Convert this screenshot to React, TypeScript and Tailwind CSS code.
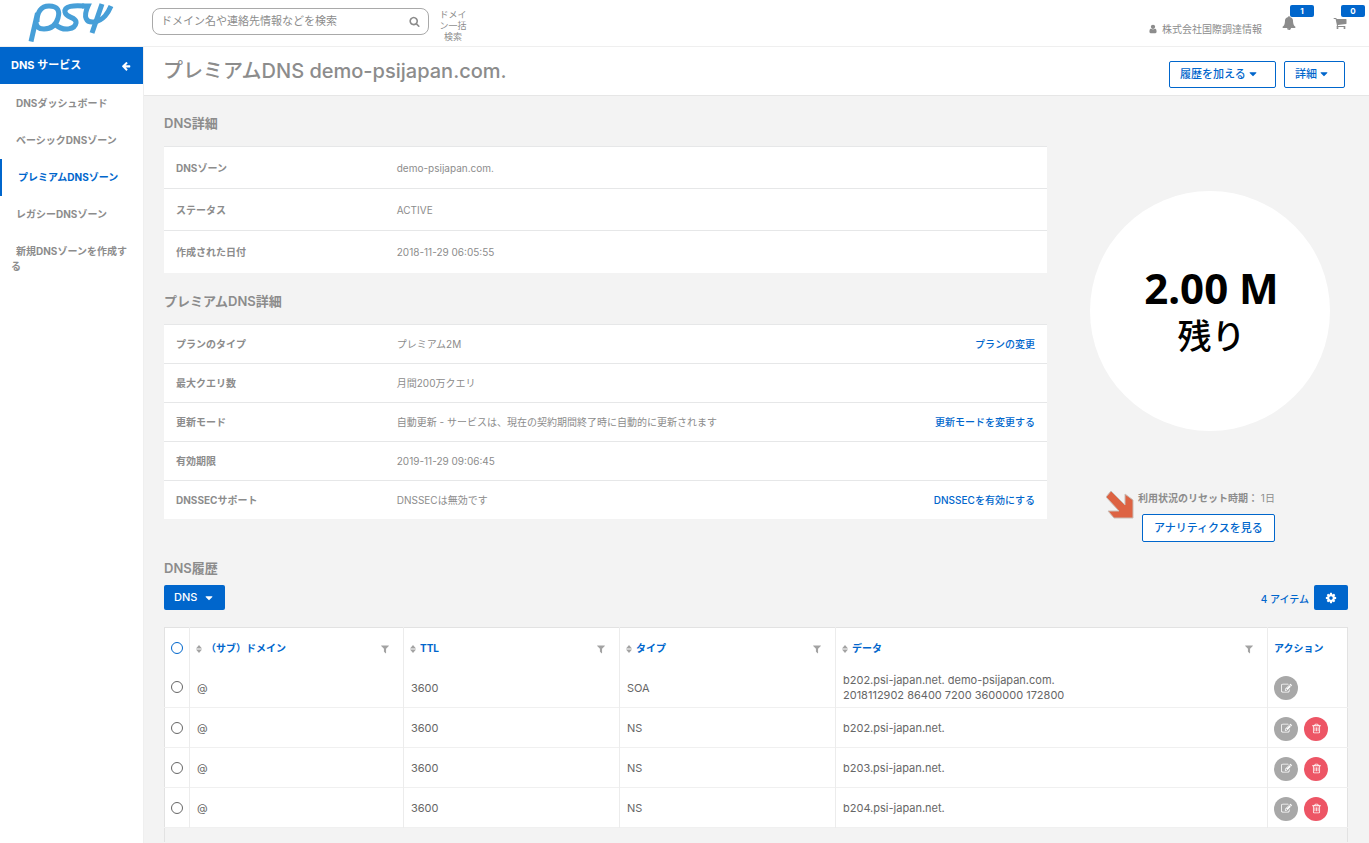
import React, { useState } from 'react';

const icons = {
  edit: "M888 1184l116-116-152-152-116 116v56h96v96h56zm440-720q-16-16-33 1l-350 350q-17 17-1 33t33-1l350-350q17-17 1-33zm80 594v190q0 119-84.5 203.5t-203.5 84.5h-832q-119 0-203.5-84.5t-84.5-203.5v-832q0-119 84.5-203.5t203.5-84.5h832q63 0 117 25 15 7 18 23 3 17-9 29l-49 49q-14 14-32 8-23-6-45-6h-832q-66 0-113 47t-47 113v832q0 66 47 113t113 47h832q66 0 113-47t47-113v-126q0-13 9-22l64-64q15-15 35-7t20 29zm-96-738l288 288-672 672h-288v-288zm444 132l-92 92-288-288 92-92q28-28 68-28t68 28l152 152q28 28 28 68t-28 68z",
  trash: "M704 736v576q0 14-9 23t-23 9h-64q-14 0-23-9t-9-23v-576q0-14 9-23t23-9h64q14 0 23 9t9 23zm256 0v576q0 14-9 23t-23 9h-64q-14 0-23-9t-9-23v-576q0-14 9-23t23-9h64q14 0 23 9t9 23zm256 0v576q0 14-9 23t-23 9h-64q-14 0-23-9t-9-23v-576q0-14 9-23t23-9h64q14 0 23 9t9 23zm128 724v-948h-896v948q0 22 7 40.5t14.5 27 10.5 8.5h832q3 0 10.5-8.5t14.5-27 7-40.5zm-672-1076h448l-48-117q-7-9-17-11h-317q-10 2-17 11zm928 32v64q0 14-9 23t-23 9h-96v948q0 83-47 143.5t-113 60.5h-832q-66 0-113-58.5t-47-141.5v-952h-96q-14 0-23-9t-9-23v-64q0-14 9-23t23-9h309l70-167q15-37 54-63t79-26h320q40 0 79 26t54 63l70 167h309q14 0 23 9t9 23z",
  search: "M1216 832q0-185-131.5-316.5t-316.5-131.5-316.5 131.5-131.5 316.5 131.5 316.5 316.5 131.5 316.5-131.5 131.5-316.5zm512 832q0 52-38 90t-90 38q-54 0-90-38l-343-342q-179 124-399 124-143 0-273.5-55.5t-225-150-150-225-55.5-273.5 55.5-273.5 150-225 225-150 273.5-55.5 273.5 55.5 225 150 150 225 55.5 273.5q0 220-124 399l343 343q37 37 37 90z",
  user: "M1536 1399q0 109-62.5 187t-150.5 78h-854q-88 0-150.5-78t-62.5-187q0-85 8.5-160.5t31.5-152 58.5-131 94-89 134.5-34.5q131 128 313 128t313-128q76 0 134.5 34.5t94 89 58.5 131 31.5 152 8.5 160.5zm-256-887q0 159-112.5 271.5t-271.5 112.5-271.5-112.5-112.5-271.5 112.5-271.5 271.5-112.5 271.5 112.5 112.5 271.5z",
  arrowLeft: "M1664 896v128q0 53-32.5 90.5t-84.5 37.5h-704l293 294q38 36 38 90t-38 90l-75 76q-37 37-90 37-52 0-91-37l-651-652q-37-37-37-90 0-52 37-91l651-650q38-38 91-38 52 0 90 38l75 74q38 38 38 91t-38 91l-293 293h704q52 0 84.5 37.5t32.5 90.5z",
  cart: "M704 1536q0 52-38 90t-90 38-90-38-38-90 38-90 90-38 90 38 38 90zm896 0q0 52-38 90t-90 38-90-38-38-90 38-90 90-38 90 38 38 90zm128-1088v512q0 24-16.5 42.5t-40.5 21.5l-1044 122q13 60 13 70 0 16-24 64h920q26 0 45 19t19 45-19 45-45 19h-1024q-26 0-45-19t-19-45q0-11 8-31.5t16-36 21.5-40 15.5-29.5l-177-823h-204q-26 0-45-19t-19-45 19-45 45-19h256q16 0 28.5 6.5t19.5 15.5 13 24.5 8 26 5.5 29.5 4.5 26h1201q26 0 45 19t19 45z",
  bell: "M912 1696q0-16-16-16-59 0-101.5-42.5t-42.5-101.5q0-16-16-16t-16 16q0 73 51.5 124.5t124.5 51.5q16 0 16-16zm816-288q0 52-38 90t-90 38h-448q0 106-75 181t-181 75-181-75-75-181h-448q-52 0-90-38t-38-90q50-42 91-88t85-119.5 74.5-158.5 50-206 19.5-260q0-152 117-282.5t307-158.5q-8-19-8-39 0-40 28-68t68-28 68 28 28 68q0 20-8 39 190 28 307 158.5t117 282.5q0 139 19.5 260t50 206 74.5 158.5 85 119.5 91 88z",
  filter: "M1595 295q17 41-14 70l-493 493v742q0 42-39 59-13 5-25 5-27 0-45-19l-256-256q-19-19-19-45v-486l-493-493q-31-29-14-70 17-39 59-39h1280q42 0 59 39z",
  cog: "M1152 896q0-106-75-181t-181-75-181 75-75 181 75 181 181 75 181-75 75-181zm512-109v222q0 12-8 23t-20 13l-185 28q-19 54-39 91 35 50 107 138 10 12 10 25t-9 23q-27 37-99 108t-94 71q-12 0-26-9l-138-108q-44 23-91 38-16 136-29 186-7 28-36 28h-222q-14 0-24.5-8.5t-11.5-21.5l-28-184q-49-16-90-37l-141 107q-10 9-25 9-14 0-25-11-126-114-165-168-7-10-7-23 0-12 8-23 15-21 51-66.5t54-70.5q-27-50-41-99l-183-27q-13-2-21-12.5t-8-23.5v-222q0-12 8-23t19-13l186-28q14-46 39-92-40-57-107-138-10-12-10-24 0-10 9-23 26-36 98.5-107.5t94.5-71.5q13 0 26 10l138 107q44-23 91-38 16-136 29-186 7-28 36-28h222q14 0 24.5 8.5t11.5 21.5l28 184q49 16 90 37l142-107q9-9 24-9 13 0 25 10 129 119 165 170 7 8 7 22 0 12-8 23-15 21-51 66.5t-54 70.5q26 50 41 98l183 28q13 2 21 12.5t8 23.5z",
  caret: "M1408 704q0 26-19 45l-448 448q-19 19-45 19t-45-19l-448-448q-19-19-19-45t19-45 45-19h896q26 0 45 19t19 45z",
};

const Icon = ({ name, className }: { name: keyof typeof icons; className?: string }) => (
  <svg viewBox="0 0 1792 1792" fill="currentColor" className={className} aria-hidden="true">
    <path d={icons[name]} />
  </svg>
);

const Logo = () => (
  <svg viewBox="0 0 90 42" className="w-[90px] h-[42px]" fill="none" stroke="#479fd8" strokeWidth="5" aria-label="PSI">
    <path d="M3 41.500L9.500 13" />
    <path d="M9 22C9 12 13 6 21 6C30 6 32 11 30 18C28 25 23 29 16 29C11 29 8 27 8 22" />
    <path d="M56 6C46 5 36 6 37 12C38 18 49 17 48 23C47 29 36 32 28 25" />
    <path d="M54 6H60C55 17 58 23 66 22C76 20 80 13 83 6" />
    <path d="M74 4L64 33" />
  </svg>
);

const menu = [
  "DNSダッシュボード",
  "ベーシックDNSゾーン",
  "プレミアムDNSゾーン",
  "レガシーDNSゾーン",
  "新規DNSゾーンを作成する",
];

const zoneDetails = [
  { label: "DNSゾーン", value: "demo-psijapan.com." },
  { label: "ステータス", value: "ACTIVE" },
  { label: "作成された日付", value: "2018-11-29 06:05:55" },
];

const premiumDetails = [
  { label: "プランのタイプ", value: "プレミアム2M", action: "プランの変更" },
  { label: "最大クエリ数", value: "月間200万クエリ" },
  { label: "更新モード", value: "自動更新 - サービスは、現在の契約期間終了時に自動的に更新されます", action: "更新モードを変更する" },
  { label: "有効期限", value: "2019-11-29 09:06:45" },
  { label: "DNSSECサポート", value: "DNSSECは無効です", action: "DNSSECを有効にする" },
];

const columns = ["（サブ）ドメイン", "TTL", "タイプ", "データ"];

const records = [
  { host: "@", ttl: 3600, type: "SOA", data: ["b202.psi-japan.net. demo-psijapan.com.", "2018112902 86400 7200 3600000 172800"] },
  { host: "@", ttl: 3600, type: "NS", data: ["b202.psi-japan.net."] },
  { host: "@", ttl: 3600, type: "NS", data: ["b203.psi-japan.net."] },
  { host: "@", ttl: 3600, type: "NS", data: ["b204.psi-japan.net."] },
];

const SortIcon = () => (
  <svg viewBox="0 0 6 8" className="w-[6px] h-[8px] shrink-0" fill="#a3a3a3" aria-hidden="true">
    <path d="M3 0L6 3.500H0ZM3 8L0 4.500H6Z" />
  </svg>
);

const Details = ({ rows, rowClass }: { rows: { label: string; value: string; action?: string }[]; rowClass: string }) => (
  <table className="w-full bg-white text-[10px]">
    <tbody>
      {rows.map((row) => (
        <tr key={row.label} className={`${rowClass} border-t border-[#e6e7e8]`}>
          <th scope="row" className="w-1/4 pl-3 pt-[2px] text-left font-bold">{row.label}</th>
          <td className="pl-3 pt-[2px]">{row.value}</td>
          <td className="pr-3 pt-[2px] text-right">
            {row.action && <a href="#" className="font-medium text-[#0066cc]">{row.action}</a>}
          </td>
        </tr>
      ))}
    </tbody>
  </table>
);

const Header = () => (
  <header className="flex h-[47px] items-start border-b border-[#efefef] bg-white">
    <a href="#" className="ml-7 w-[124px] shrink-0"><Logo /></a>
    <div className="mt-2 flex h-[27px] w-[277px] items-center rounded-lg border border-[#a9a9a9] pl-2 pr-2">
      <input
        type="text"
        aria-label="検索"
        placeholder="ドメイン名や連絡先情報などを検索"
        className="min-w-0 flex-1 text-[11px] outline-none placeholder:text-[#8c8c8c]"
      />
      <button type="button" aria-label="検索する"><Icon name="search" className="h-[11px] w-[11px]" /></button>
    </div>
    <a href="#" className="ml-2 mt-[9px] w-8 text-center text-[9px] leading-[11px]">ドメイン一括検索</a>
    <div className="ml-auto flex items-center pr-[22px] pt-3">
      <a href="#" className="mr-5 mt-3 flex items-center gap-1 text-[10px] leading-[10px]">
        <Icon name="user" className="h-[10px] w-[10px]" />
        株式会社国際調達情報
      </a>
      <button type="button" aria-label="お知らせ" className="relative mr-[37px]">
        <Icon name="bell" className="h-[14px] w-[14px]" />
        <span className="absolute -top-[11px] left-2 h-3 w-6 rounded-xs bg-[#0066cc] text-[8px] font-bold leading-[12px] text-white">1</span>
      </button>
      <button type="button" aria-label="カート" className="relative">
        <Icon name="cart" className="h-[14px] w-[14px]" />
        <span className="absolute -top-[11px] left-2 h-3 w-6 rounded-xs bg-[#0066cc] text-[8px] font-bold leading-[12px] text-white">0</span>
      </button>
    </div>
  </header>
);

const Sidebar = () => (
  <nav className="w-[143px] shrink-0 bg-white text-[10px] font-bold">
    <div className="mb-px flex h-[37px] items-center justify-between bg-[#0066cc] pl-[11px] pr-3 text-[11px] text-white">
      DNS サービス
      <button type="button" aria-label="戻る"><Icon name="arrowLeft" className="h-[10px] w-[10px]" /></button>
    </div>
    {menu.map((item) => (
      <a
        key={item}
        href="#"
        className={`block min-h-[37px] pl-[11px] pr-2 pt-[11px] indent-[5px] leading-[15px] ${
          item === "プレミアムDNSゾーン" ? "border-l-2 border-[#0066cc] text-[#0066cc]" : ""
        }`}
      >
        {item}
      </a>
    ))}
  </nav>
);

const Usage = () => (
  <div className="flex w-[301px] shrink-0 flex-col items-center pl-6 pt-[78px]">
    <div className="flex h-[240px] w-[240px] flex-col items-center justify-center rounded-full bg-white pl-1 pt-[2px] font-['Noto_Sans','Noto_Sans_CJK_JP',sans-serif] text-black">
      <span className="text-[42px] font-bold leading-[48px]">2.00 M</span>
      <span className="text-[34px] font-medium leading-[48px]">残り</span>
    </div>
    <div className="mt-[60px] flex items-start self-start pl-[35px]">
      <svg viewBox="0 0 28 28" className="h-7 w-7" aria-hidden="true">
        <path d="M5 0L19 14V3L27 9V27H8L2 20H13L0 6Z" fill="#dd6343" stroke="#c9bdb6" strokeWidth="1" />
      </svg>
      <div className="flex flex-col items-start">
        <p className="ml-1 text-[10px] leading-[15px]"><b>利用状況のリセット時期：</b> 1日</p>
        <button type="button" className="ml-2 mt-2 h-7 rounded-xs border border-[#0066cc] bg-white px-[11px] text-[11px] font-medium text-[#0066cc]">
          アナリティクスを見る
        </button>
      </div>
    </div>
  </div>
);

const Records = () => {
  const [selected, setSelected] = useState<number | null>(null);

  return (
    <table className="w-full table-fixed border-x border-t border-[#e2e2e2] text-[11px] text-[#666666]">
      <colgroup>
        <col className="w-[25px]" />
        <col className="w-[214px]" />
        <col className="w-[216px]" />
        <col className="w-[216px]" />
        <col />
        <col className="w-[80px]" />
      </colgroup>
      <thead className="bg-white text-[10px] text-[#0066cc]">
        <tr className="h-10">
          <th className="border-r border-[#ececec]">
            <input type="radio" name="record" aria-label="すべて選択" className="mx-auto block h-3 w-3 appearance-none rounded-full border border-[#0066cc]" />
          </th>
          {columns.map((column) => (
            <th key={column} className="border-r border-[#ececec] pl-[6px] pr-[13px] pt-[2px]">
              <div className="flex items-center gap-1">
                <SortIcon />
                <span>{column}</span>
                <button type="button" aria-label="フィルター" className="ml-auto"><Icon name="filter" className="h-[10px] w-[10px] text-[#a3a3a3]" /></button>
              </div>
            </th>
          ))}
          <th className="pl-[6px] pt-[2px] text-left">アクション</th>
        </tr>
      </thead>
      <tbody>
        {records.map((record, index) => (
          <tr key={index} className="h-10 border-b border-[#f0f0f0] bg-white">
            <td className="border-r border-[#ececec]">
              <input
                type="radio"
                name="record"
                aria-label={record.data[0]}
                checked={selected === index}
                onChange={() => setSelected(index)}
                className="mx-auto block h-3 w-3 appearance-none rounded-full border border-[#666666] checked:bg-[#0066cc]"
              />
            </td>
            <td className="border-r border-[#ececec] pl-[7px] pt-[2px]">{record.host}</td>
            <td className="border-r border-[#ececec] pl-[7px] pt-[2px]">{record.ttl}</td>
            <td className="border-r border-[#ececec] pl-[7px] pt-[2px]">{record.type}</td>
            <td className="border-r border-[#ececec] pl-[7px] pt-[2px] leading-[15px]">
              {record.data.map((line) => <div key={line}>{line}</div>)}
            </td>
            <td className="pl-[6px] pt-[2px]">
              <div className="flex gap-[6px]">
                <button type="button" aria-label="編集" className="flex h-6 w-6 items-center justify-center rounded-full bg-[#a8a8a8] text-white">
                  <Icon name="edit" className="h-[11px] w-[11px]" />
                </button>
                {record.type !== "SOA" && (
                  <button type="button" aria-label="削除" className="flex h-6 w-6 items-center justify-center rounded-full bg-[#ed5565] text-white">
                    <Icon name="trash" className="h-[11px] w-[11px]" />
                  </button>
                )}
              </div>
            </td>
          </tr>
        ))}
      </tbody>
      <tfoot>
        <tr className="h-[14px]"><td colSpan={6}></td></tr>
      </tfoot>
    </table>
  );
};

const App = () => {
  return (
    <div className="flex min-h-screen flex-col bg-white font-['Inter','Noto_Sans_CJK_JP',sans-serif] text-[#8c8c8c]">
      <Header />
      <div className="flex flex-1">
        <Sidebar />
        <div className="min-w-0 flex-1 border-l border-[#efefef] bg-[#f3f3f3]">
          <div className="flex h-[49px] items-center justify-between border-b border-[#e6e6e6] bg-white pl-[19px] pr-6">
            <h1 className="text-[20px] font-medium">プレミアムDNS demo-psijapan.com.</h1>
            <div className="mt-[6px] flex gap-2 text-[11px] font-medium text-[#0066cc]">
              <button type="button" className="flex h-[27px] w-[107px] items-center gap-px rounded-xs border border-[#0066cc] px-[10px]">
                履歴を加える<Icon name="caret" className="h-3 w-3" />
              </button>
              <button type="button" className="flex h-[27px] w-[61px] items-center gap-px rounded-xs border border-[#0066cc] px-[10px]">
                詳細<Icon name="caret" className="h-3 w-3" />
              </button>
            </div>
          </div>

          <main className="pl-5 pr-[21px] pt-[17px]">
            <div className="flex">
              <div className="min-w-0 flex-1">
                <h2 className="mb-[13px] text-[13px] font-semibold leading-[20px]">DNS詳細</h2>
                <Details rows={zoneDetails} rowClass="h-[42px]" />
                <h2 className="mb-[13px] mt-[18px] text-[13px] font-semibold leading-[20px]">プレミアムDNS詳細</h2>
                <Details rows={premiumDetails} rowClass="h-[39px]" />
              </div>
              <Usage />
            </div>

            <h2 className="mt-4 text-[13px] font-semibold leading-[20px]">DNS履歴</h2>
            <div className="mb-[17px] mt-[7px] flex items-center justify-between">
              <button type="button" className="flex h-[25px] items-center gap-[6px] rounded-xs bg-[#0066cc] px-[10px] text-[11px] font-medium text-white">
                DNS<Icon name="caret" className="h-3 w-3" />
              </button>
              <div className="flex items-center gap-[5px] text-[10px] font-medium text-[#0066cc]">
                <span className="pt-1">4 アイテム</span>
                <button type="button" aria-label="設定" className="flex h-[25px] w-[34px] items-center justify-center rounded-xs bg-[#0066cc] text-white">
                  <Icon name="cog" className="h-3 w-3" />
                </button>
              </div>
            </div>
            <Records />
          </main>
        </div>
      </div>
    </div>
  );
};

export default App;
